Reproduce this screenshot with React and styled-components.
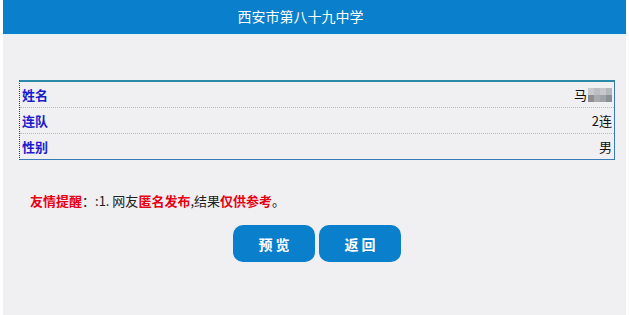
import React from 'react';
import styled, { createGlobalStyle } from 'styled-components';

const GlobalStyle = createGlobalStyle`
    html, body {
        margin: 0;
        padding: 0;
        background: #ffffff;
    }
    body {
        font-family: "Noto Sans CJK SC", "Liberation Sans", sans-serif;
    }
`

const Page = styled.div`
    margin: 0 3px;
    min-height: 315px;
    background-color: #f0eff2;
    display: flex;
    flex-direction: column;
`

const Header = styled.div`
    height: 35px;
    background-color: #0a80cc;
    border-bottom: 1px solid #dff3f8;
    color: white;
    display: flex;
    justify-content: center;
    align-items: center;
    padding: 0 28px 3px 0;
    box-sizing: border-box;
    font-size: 14px;
`

const Content = styled.div`
    padding: 45px 11px 0 16px;
`

const InfoTable = styled.div`
    border-top: 2px solid #2a8aa8;
    border-left: 1px dotted #1a3a9a;
    border-right: 1px solid #3a7ab8;
    border-bottom: 1px solid #3a7ab8;
    display: flex;
    flex-direction: column;
`

const Row = styled.div`
    height: 25px;
    display: flex;
    justify-content: space-between;
    align-items: center;
    padding: 0 2px 0 2px;
    border-bottom: ${props => props.last ? 'none' : '1px dotted #b8b8c0'};
    font-size: 13px;
`

const Label = styled.div`
    color: #1c1ccc;
    font-weight: bold;
`

const Value = styled.div`
    color: #111;
    display: flex;
    align-items: center;
`

const Mosaic = styled.span`
    display: inline-grid;
    grid-template-columns: repeat(4, 6px);
    grid-template-rows: repeat(2, 7px);
    margin-left: 1px;

    span:nth-child(1) { background: #c9c9cc; }
    span:nth-child(2) { background: #b9bdc4; }
    span:nth-child(3) { background: #c4c7cc; }
    span:nth-child(4) { background: #b3b8be; }
    span:nth-child(5) { background: #8e8f93; }
    span:nth-child(6) { background: #a9aaab; }
    span:nth-child(7) { background: #9fa3a8; }
    span:nth-child(8) { background: #8a9098; }
`

const Notice = styled.div`
    margin: 31px 0 0 11px;
    font-size: 13px;
    color: #222;
`

const Red = styled.span`
    color: #e60012;
    font-weight: bold;
`

const Buttons = styled.div`
    display: flex;
    justify-content: center;
    gap: 4px;
    margin: 15px 0 0 0;
`

const Button = styled.div`
    width: 82px;
    height: 37px;
    border-radius: 10px;
    background-color: #0a7fcc;
    color: white;
    font-size: 14px;
    font-weight: bold;
    letter-spacing: 3px;
    display: flex;
    justify-content: center;
    align-items: center;
    padding-left: 3px;
    box-sizing: border-box;
`

export default function App() {
    return (
        <>
            <GlobalStyle />
            <Page>
                <Header>西安市第八十九中学</Header>
                <Content>
                    <InfoTable>
                        <Row>
                            <Label>姓名</Label>
                            <Value>
                                马
                                <Mosaic>
                                    <span /><span /><span /><span />
                                    <span /><span /><span /><span />
                                </Mosaic>
                            </Value>
                        </Row>
                        <Row>
                            <Label>连队</Label>
                            <Value>2连</Value>
                        </Row>
                        <Row last>
                            <Label>性别</Label>
                            <Value>男</Value>
                        </Row>
                    </InfoTable>
                    <Notice>
                        <Red>友情提醒</Red>：:1. 网友<Red>匿名发布</Red>,结果<Red>仅供参考</Red>。
                    </Notice>
                    <Buttons>
                        <Button>预览</Button>
                        <Button>返回</Button>
                    </Buttons>
                </Content>
            </Page>
        </>
    );
}
